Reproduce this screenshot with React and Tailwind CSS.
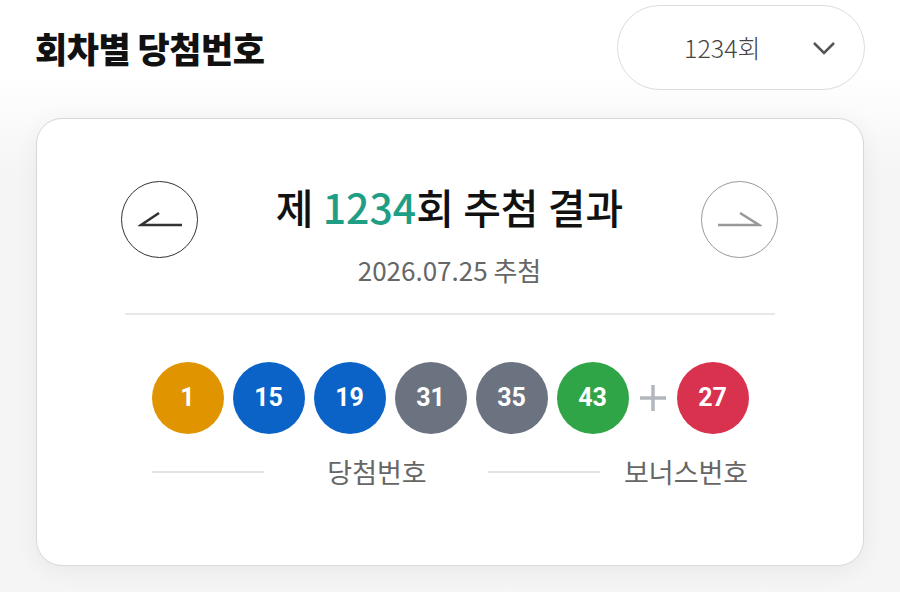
import React from 'react';

const FONT = { fontFamily: '"Noto Sans CJK KR", "Noto Sans", sans-serif' };

const balls = [
  { n: 1, c: 'bg-[#e09400]' },
  { n: 15, c: 'bg-[#0b63c8]' },
  { n: 19, c: 'bg-[#0b63c8]' },
  { n: 31, c: 'bg-[#6c7380]' },
  { n: 35, c: 'bg-[#6c7380]' },
  { n: 43, c: 'bg-[#2fa548]' },
];

function Ball({ n, c }) {
  return (
    <div
      className={`w-[72px] h-[72px] rounded-full ${c} flex items-center justify-center text-white text-[25px] font-bold`}
      style={{ fontFamily: 'Roboto, "Noto Sans", sans-serif' }}
    >
      {n}
    </div>
  );
}

function NavButton({ dir }) {
  const dark = dir === 'left';
  return (
    <button
      className={`w-[77px] h-[77px] shrink-0 rounded-full border-[1.5px] flex items-center justify-center ${
        dark ? 'border-[#333]' : 'border-[#999]'
      }`}
    >
      <svg width="44" height="20" viewBox="0 0 44 20" fill="none">
        {dark ? (
          <path d="M21 3 L3 15 H44" stroke="#333" strokeWidth="2.6" strokeLinejoin="miter" />
        ) : (
          <path d="M0 15 H41 L22 3" stroke="#999" strokeWidth="2.6" strokeLinejoin="miter" />
        )}
      </svg>
    </button>
  );
}

export default function App() {
  return (
    <div
      className="w-[900px] h-[592px] bg-gradient-to-b from-white from-[12%] to-[#f5f5f5] to-[30%] overflow-hidden"
      style={FONT}
    >
      {/* Header */}
      <div className="flex items-center justify-between pl-[35px] pr-[35px] pt-[5px]">
        <h1 className="text-[35px] font-black text-[#111] tracking-[-0.5px] leading-none">회차별 당첨번호</h1>
        <div className="w-[248px] h-[85px] rounded-full border-[1.5px] border-[#dcdcdc] bg-white flex items-center pl-[66px] pr-[28px] justify-between">
          <span className="text-[25px] font-light text-[#444]">1234회</span>
          <svg width="24" height="14" viewBox="0 0 24 14" fill="none">
            <path d="M2 2 L12 12 L22 2" stroke="#555" strokeWidth="2.6" />
          </svg>
        </div>
      </div>

      {/* Card */}
      <div className="mx-[36px] mt-[28px] h-[448px] rounded-[26px] bg-white border-[1.5px] border-[#d8d8d8] shadow-[0_4px_24px_rgba(0,0,0,0.06)]">
        <div className="flex items-start justify-between pl-[84px] pr-[85px] pt-[62px]">
          <NavButton dir="left" />
          <div className="flex flex-col items-center">
            <div className="text-[41px] font-medium text-[#111] leading-[50px]">
              제 <span className="text-[#1f9e86]">1234</span>회 추첨 결과
            </div>
            <div className="mt-[24px] text-[26px] text-[#666] leading-[30px]">2026.07.25 추첨</div>
          </div>
          <NavButton dir="right" />
        </div>

        <div className="mx-[88px] mt-[28px] h-[2px] bg-[#e8e8e8]" />

        <div className="flex items-center justify-center mt-[47px]">
          <div className="flex gap-[9px]">
            {balls.map((b) => (
              <Ball key={b.n} {...b} />
            ))}
          </div>
          <svg className="mx-[10px]" width="28" height="28" viewBox="0 0 28 28">
            <path d="M14 1 V27 M1 14 H27" stroke="#b2b6bd" strokeWidth="3.5" />
          </svg>
          <Ball n={27} c="bg-[#d9324f]" />
        </div>

        <div className="flex items-center pl-[115px] mt-[20px] text-[27px] text-[#666] leading-[36px]">
          <div className="w-[112px] h-[2px] bg-[#e3e3e3]" />
          <span className="ml-[58px] w-[110px] text-center">당첨번호</span>
          <div className="ml-[56px] w-[112px] h-[2px] bg-[#e3e3e3]" />
          <span className="ml-[24px]">보너스번호</span>
        </div>
      </div>
    </div>
  );
}
